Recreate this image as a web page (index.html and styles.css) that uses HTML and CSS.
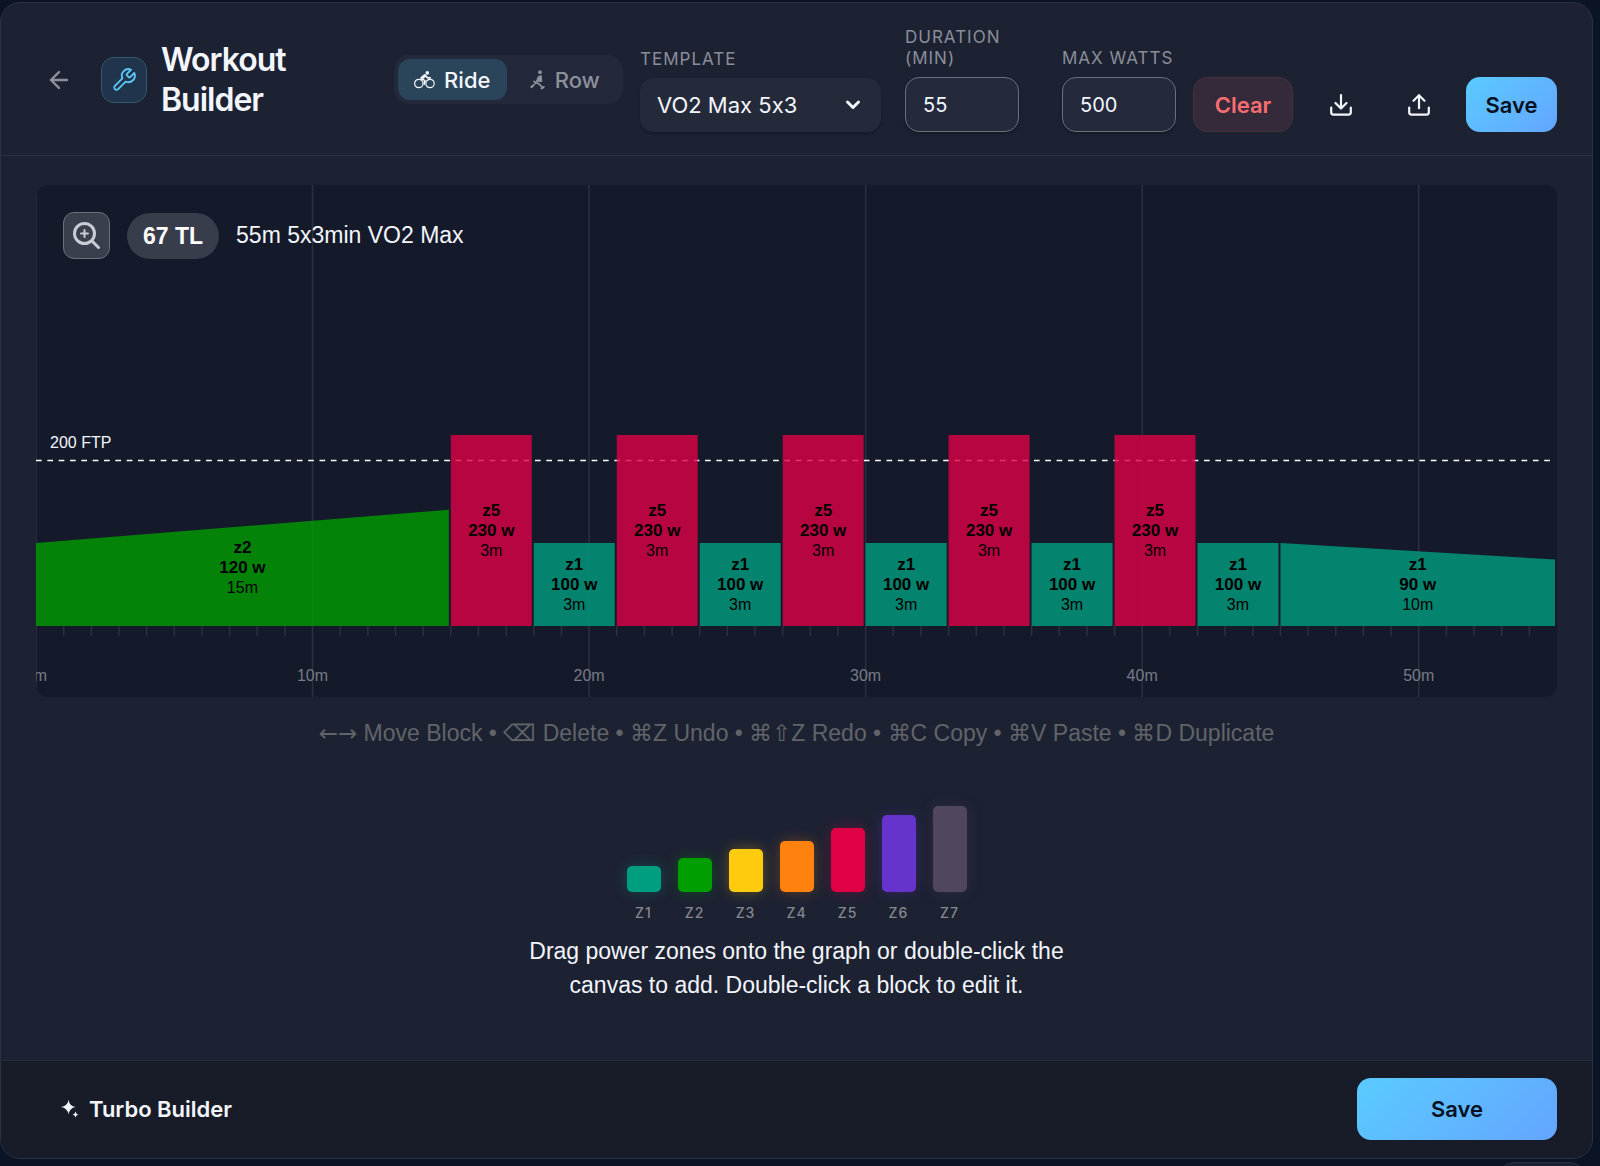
FILE: index.html
```html
<!DOCTYPE html>
<html lang="en">
<head>
    <meta charset="UTF-8">
    <meta name="viewport" content="width=device-width, initial-scale=1.0">
    <title>Workout Builder</title>
    <link rel="stylesheet" href="styles.css">
</head>
<body>

    <div class="panel">
        <header class="header">
            <div class="brand">
                <button class="icon-btn back" aria-label="Back">
                    <svg width="20" height="20" viewBox="0 0 20 20" fill="none" stroke="currentColor" stroke-width="2.400" stroke-linecap="round" stroke-linejoin="round"><path d="M18 10H2M10 2L2 10l8 8"/></svg>
                </button>
                <div class="logo">
                    <svg width="26" height="26" viewBox="0 0 24 24" fill="none" stroke="currentColor" stroke-width="1.700" stroke-linecap="round" stroke-linejoin="round"><path d="M14.700 6.300a1 1 0 0 0 0 1.400l1.600 1.600a1 1 0 0 0 1.400 0l3.770-3.770a6 6 0 0 1-7.940 7.940l-6.910 6.910a2.120 2.120 0 0 1-3-3l6.910-6.910a6 6 0 0 1 7.940-7.940l-3.760 3.760z"/></svg>
                </div>
                <h1 class="title">Workout Builder</h1>
            </div>

            <div class="tools">
                <div class="tabs">
                    <button class="tab active">
                        <svg width="21" height="18" viewBox="0 0 21 18" fill="none" stroke="currentColor" stroke-linecap="round" stroke-linejoin="round"><circle cx="4.800" cy="12.500" r="4.200" stroke-width="1.200"/><circle cx="16" cy="12.500" r="4.200" stroke-width="1.200"/><circle cx="13.300" cy="1.900" r="1.800" fill="currentColor" stroke="none"/><path d="M7.800 7.200l3-2.600" stroke-width="3"/><path d="M11.500 4.600l2.200 2.300h2.600M7.800 7.600l3 2-.6 3.600" stroke-width="1.600"/></svg>
                        Ride
                    </button>
                    <button class="tab">
                        <svg width="16" height="20" viewBox="0 0 16 20" fill="currentColor" stroke="currentColor" stroke-linecap="round" stroke-linejoin="round"><circle cx="10" cy="2.200" r="1.900" stroke="none"/><path d="M8.500 6.500l2.700-.9.600 6-5-.4z" stroke-width="1"/><path d="M2 16.500l6-5.500" stroke-width="1.300"/><path d="M1.500 17l1.500-1.300" stroke-width="2.200"/><path d="M4 11.500l5.500 2.800 3 3.700" stroke-width="1.800" fill="none"/><path d="M11.500 18.500l2.300-1.700" stroke-width="2"/></svg>
                        Row
                    </button>
                </div>

                <div class="field template">
                    <label for="template">Template</label>
                    <div class="select">
                        <select id="template">
                            <option>VO2 Max 5x3</option>
                        </select>
                        <svg width="16" height="12" viewBox="0 0 16 12" fill="none" stroke="currentColor" stroke-width="3" stroke-linecap="round" stroke-linejoin="round"><path d="M2.500 3L8 8.500 13.500 3"/></svg>
                    </div>
                </div>
                <div class="field duration">
                    <label for="duration">Duration (min)</label>
                    <input type="text" inputmode="numeric" id="duration" value="55">
                </div>
                <div class="field watts">
                    <label for="max-watts">Max Watts</label>
                    <input type="text" inputmode="numeric" id="max-watts" value="500">
                </div>

                <button class="btn clear">Clear</button>
                <button class="icon-btn" aria-label="Download">
                    <svg width="22" height="22" viewBox="0 0 22 22" fill="none" stroke="currentColor" stroke-width="2.200" stroke-linecap="round" stroke-linejoin="round"><path d="M11 1.200v13M5.500 9l5.500 5.500L16.500 9M1.200 13.500v4.800a2.300 2.300 0 0 0 2.300 2.300h15a2.300 2.300 0 0 0 2.300-2.300v-4.800"/></svg>
                </button>
                <button class="icon-btn" aria-label="Upload">
                    <svg width="22" height="22" viewBox="0 0 22 22" fill="none" stroke="currentColor" stroke-width="2.200" stroke-linecap="round" stroke-linejoin="round"><path d="M11 14.200v-13M5.500 6.700L11 1.200l5.500 5.500M1.200 13.500v4.800a2.300 2.300 0 0 0 2.300 2.300h15a2.300 2.300 0 0 0 2.300-2.300v-4.800"/></svg>
                </button>
                <button class="btn save">Save</button>
            </div>
        </header>

        <main class="content">
            <div class="chart">
                <svg id="workout-chart" viewBox="0 0 1521 512"></svg>
                <div class="chart-info">
                    <button class="zoom-btn" aria-label="Zoom in">
                        <svg width="30" height="30" viewBox="1 1 30 30" fill="none" stroke="currentColor" stroke-width="3" stroke-linecap="round"><circle cx="13.500" cy="13.500" r="10"/><path d="M21 21l6.500 6.500"/><path d="M13.500 10v7M10 13.500h7" stroke-width="2"/></svg>
                    </button>
                    <span class="load">67 TL</span>
                    <span class="summary">55m 5x3min VO2 Max</span>
                </div>
            </div>

            <p class="shortcuts"><span class="arrows">←→</span> Move Block • ⌫ Delete • ⌘Z Undo • ⌘⇧Z Redo • ⌘C Copy • ⌘V Paste • ⌘D Duplicate</p>

            <div class="zones">
                <div class="zone"><div class="bar z1"></div>Z1</div>
                <div class="zone"><div class="bar z2"></div>Z2</div>
                <div class="zone"><div class="bar z3"></div>Z3</div>
                <div class="zone"><div class="bar z4"></div>Z4</div>
                <div class="zone"><div class="bar z5"></div>Z5</div>
                <div class="zone"><div class="bar z6"></div>Z6</div>
                <div class="zone"><div class="bar z7"></div>Z7</div>
            </div>
            <p class="hint">Drag power zones onto the graph or double-click the canvas to add. Double-click a block to edit it.</p>
        </main>

        <footer class="footer">
            <button class="turbo">
                <svg width="18" height="20" viewBox="0 0 18 20" fill="currentColor"><path d="M7.500 1Q8.500 7 14.500 8 8.500 9 7.500 15.500 6.500 9 0 8 6.500 7 7.500 1z"/><path d="M14.500 12.500q.4 2.600 3 3-2.600.4-3 3-.4-2.600-3-3 2.600-.4 3-3z"/></svg>
                Turbo Builder
            </button>
            <button class="btn save large">Save</button>
        </footer>
    </div>

    <div class="dock"></div>

    <script>
        const blocks = [
            { zone: 2, start: 100, end: 140, mins: 15 },
            { zone: 5, start: 230, end: 230, mins: 3 },
            { zone: 1, start: 100, end: 100, mins: 3 },
            { zone: 5, start: 230, end: 230, mins: 3 },
            { zone: 1, start: 100, end: 100, mins: 3 },
            { zone: 5, start: 230, end: 230, mins: 3 },
            { zone: 1, start: 100, end: 100, mins: 3 },
            { zone: 5, start: 230, end: 230, mins: 3 },
            { zone: 1, start: 100, end: 100, mins: 3 },
            { zone: 5, start: 230, end: 230, mins: 3 },
            { zone: 1, start: 100, end: 100, mins: 3 },
            { zone: 1, start: 100, end: 80, mins: 10 }
        ];

        const duration = 55;
        const ftp = 200;
        const width = 1521;
        const height = 512;
        const base = 441;
        const perMin = width / duration;
        const perWatt = 0.83;

        function yFor(watts) {
            return base - watts * perWatt;
        }

        function drawChart() {
            let svg = '';

            // Time grid, a long line each 10 minutes and a tick each minute
            for (let m = 0; m < duration; m++) {
                let x = m * perMin;
                if (m % 10 === 0) {
                    svg += `<line class="grid" x1="${x}" x2="${x}" y1="0" y2="${height}"/>`;
                    svg += `<text class="axis" x="${x}" y="496">${m}m</text>`;
                } else {
                    svg += `<line class="tick" x1="${x}" x2="${x}" y1="${base}" y2="${base + 10}"/>`;
                }
            }

            // FTP line
            svg += `<line class="ftp" x1="0" x2="${width - 2}" y1="${yFor(ftp) + 0.5}" y2="${yFor(ftp) + 0.5}"/>`;
            svg += `<text class="ftp-label" x="14" y="263">${ftp} FTP</text>`;

            // Workout blocks
            let x = 0;
            blocks.forEach(b => {
                let w = b.mins * perMin - 2;
                let mid = x + w / 2;
                let cy = (yFor(Math.max(b.start, b.end)) + base) / 2;
                svg += `<polygon class="block z${b.zone}" points="${x},${base} ${x},${yFor(b.start)} ${x + w},${yFor(b.end)} ${x + w},${base}"/>`;
                svg += `<text class="block-power" x="${mid}" y="${cy - 15}">z${b.zone}</text>`;
                svg += `<text class="block-power" x="${mid}" y="${cy + 5}">${(b.start + b.end) / 2} w</text>`;
                svg += `<text class="block-time" x="${mid}" y="${cy + 25}">${b.mins}m</text>`;
                x += b.mins * perMin;
            });

            document.getElementById('workout-chart').innerHTML = svg;
        }

        drawChart();
    </script>

</body>
</html>
```
FILE: styles.css
```css
* {
    box-sizing: border-box;
}

body {
    margin: 0;
    padding: 2px 7px 7px 0;
    min-height: 100vh;
    display: flex;
    flex-direction: column;
    background-color: #0b1425;
    color: #f3f6fc;
    font-family: Inter, "Liberation Sans", sans-serif;
    font-size: 22px;
    font-variant-ligatures: no-contextual;
    overflow: hidden;
}

button, input, select {
    font-family: inherit;
    font-size: 22px;
    font-variant-ligatures: inherit;
    color: inherit;
}

button {
    display: flex;
    align-items: center;
    justify-content: center;
    border: none;
    background: none;
    padding: 0;
    cursor: pointer;
}

.panel {
    flex: 1;
    display: flex;
    flex-direction: column;
    background-color: #1d2233;
    border: 1px solid #2a3146;
    border-radius: 20px;
    overflow: hidden;
}

/* Header */

.header {
    display: flex;
    align-items: center;
    justify-content: space-between;
    padding: 24px 35px 23px;
    border-bottom: 1px solid #2b3144;
}

.brand {
    display: flex;
    align-items: center;
}

.icon-btn {
    width: 61px;
    height: 55px;
}

.back {
    width: 46px;
    color: #8e919c;
}

.logo {
    display: flex;
    align-items: center;
    justify-content: center;
    width: 46px;
    height: 46px;
    margin: 0 14px 0 19px;
    border: 1px solid #2f5872;
    border-radius: 13px;
    background-color: #20344b;
    color: #5ac8fa;
}

.title {
    width: min-content;
    margin: 0;
    font-size: 32px;
    font-weight: 600;
    line-height: 40px;
    letter-spacing: -1px;
}

.tools {
    display: flex;
    align-items: flex-end;
    gap: 17px;
}

.tabs {
    display: flex;
    align-self: center;
    gap: 4px;
    width: 229px;
    padding: 4px;
    border-radius: 15px;
    background-color: #23283a;
}

.tab {
    flex: 1;
    gap: 9px;
    height: 41px;
    border-radius: 12px;
    font-weight: 500;
    color: #8e919c;
}

.tab.active {
    background-color: #2a4459;
    color: #f3f6fc;
}

.field label {
    display: block;
    margin-bottom: 8px;
    font-size: 17px;
    line-height: 21px;
    letter-spacing: 1px;
    text-transform: uppercase;
    color: #8b8e99;
}

.template {
    width: 248px;
}

.duration {
    width: 140px;
}

.watts {
    width: 114px;
}

.field input {
    display: block;
    width: 114px;
    height: 55px;
    padding: 0 17px;
    border: 1px solid #6c707d;
    border-radius: 14px;
    background-color: #242a3c;
    box-shadow: 0 2px 3px rgba(0, 0, 0, 0.25);
    font-size: 20px;
}

.select {
    position: relative;
    width: 241px;
}

.select select {
    display: block;
    appearance: none;
    width: 100%;
    height: 54px;
    padding: 0 17px;
    border: none;
    border-radius: 14px;
    background-color: #252a3b;
    box-shadow: 0 2px 3px rgba(0, 0, 0, 0.25);
}

.select svg {
    position: absolute;
    top: 21px;
    right: 20px;
    pointer-events: none;
}

.btn {
    height: 55px;
    border-radius: 14px;
    font-weight: 600;
}

.clear {
    width: 100px;
    border: 1px solid #48303f;
    background-color: #352a3a;
    color: #f96e70;
}

.save {
    width: 91px;
    background: linear-gradient(135deg, #5acbff, #64a5ff);
    color: #07101f;
}

/* Chart */

.content {
    flex: 1;
    padding: 29px 35px 58px;
    font-family: "Liberation Sans", Arial, sans-serif;
    font-size: 23px;
}

.chart {
    position: relative;
    border-radius: 12px;
    background-color: #151a2b;
    overflow: hidden;
}

.chart > svg {
    display: block;
    width: 100%;
}

.chart text {
    font-size: 16px;
    text-anchor: middle;
}

.grid, .tick {
    stroke: #2b3041;
    stroke-width: 1.5;
}

.chart .axis {
    fill: #777b87;
}

.ftp {
    stroke: #ffffff;
    stroke-width: 1.5;
    stroke-dasharray: 5.67;
}

.chart .ftp-label {
    fill: #f3f6fc;
    text-anchor: start;
}

.block {
    opacity: 0.8;
}

.block.z1 { fill: #009e80; }
.block.z2 { fill: #009e00; }
.block.z5 { fill: #df0046; }

.chart .block-power {
    font-size: 17px;
    font-weight: bold;
}

.chart-info {
    position: absolute;
    top: 27px;
    left: 27px;
    display: flex;
    align-items: center;
    gap: 17px;
}

.zoom-btn {
    width: 47px;
    height: 47px;
    border: 1px solid #6c707b;
    border-radius: 11px;
    background-color: #3a3f4d;
    color: #c9ccd4;
}

.load {
    padding: 0 16px;
    line-height: 46px;
    border-radius: 23px;
    background-color: #383d4c;
    color: #ffffff;
    font-weight: bold;
}

.shortcuts {
    margin: 19px 0 56px;
    line-height: 34px;
    text-align: center;
    color: #616469;
}

.arrows {
    font-family: "DejaVu Sans", sans-serif;
}

/* Power zones */

.zones {
    display: flex;
    align-items: flex-end;
    justify-content: center;
    gap: 17px;
}

.zone {
    width: 34px;
    font-family: Inter, sans-serif;
    font-size: 14px;
    font-weight: 500;
    line-height: 17px;
    letter-spacing: 1px;
    text-align: center;
    color: #85888f;
}

.bar {
    margin-bottom: 12px;
    border-radius: 5px;
    cursor: grab;
}

.bar.z1 { height: 26px; background-color: #009e80; box-shadow: 0 0 14px rgba(0, 158, 128, 0.3); }
.bar.z2 { height: 34px; background-color: #009e00; box-shadow: 0 0 14px rgba(0, 158, 0, 0.3); }
.bar.z3 { height: 43px; background-color: #ffcb0e; box-shadow: 0 0 14px rgba(255, 203, 14, 0.3); }
.bar.z4 { height: 51px; background-color: #ff820e; box-shadow: 0 0 14px rgba(255, 130, 14, 0.3); }
.bar.z5 { height: 64px; background-color: #df0046; box-shadow: 0 0 14px rgba(223, 0, 70, 0.3); }
.bar.z6 { height: 77px; background-color: #6633cc; box-shadow: 0 0 14px rgba(102, 51, 204, 0.3); }
.bar.z7 { height: 86px; background-color: #50475c; box-shadow: 0 0 14px rgba(80, 71, 92, 0.3); }

.hint {
    max-width: 560px;
    margin: 13px auto 0;
    line-height: 34px;
    text-align: center;
}

/* Footer */

.footer {
    display: flex;
    align-items: center;
    justify-content: space-between;
    padding: 17px 35px 18px 60px;
    border-top: 1px solid #272c3b;
    background-color: #171c28;
}

.turbo {
    gap: 10px;
    font-weight: 600;
}

.save.large {
    width: 200px;
    height: 62px;
}

.dock {
    position: fixed;
    right: 12px;
    bottom: -52px;
    width: 93px;
    height: 56px;
    border: 1px solid #2a3146;
    border-radius: 20px;
    background-color: #1a2030;
}
```
